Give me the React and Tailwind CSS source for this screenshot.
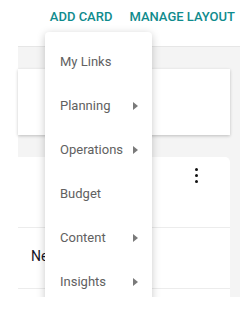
import React from 'react';

const items = [
  { label: 'My Links', sub: false },
  { label: 'Planning', sub: true },
  { label: 'Operations', sub: true },
  { label: 'Budget', sub: false },
  { label: 'Content', sub: true },
  { label: 'Insights', sub: true },
];

const Arrow = () => (
  <svg width="5" height="8" viewBox="0 0 5 8" className="absolute left-[88px] top-1/2 -translate-y-1/2">
    <path d="M0 0 L5 4 L0 8 Z" fill="#7a7a7a" />
  </svg>
);

const App = () => {
  return (
    <div className="w-[243px] h-[318px] bg-white font-['Roboto',sans-serif]">
      <div className="relative h-[297px] overflow-hidden">
        <div className="flex justify-end gap-[17px] pr-[8px] pt-[10px] h-[36px] text-[13px] font-medium text-[#0f8b8d] leading-[14px]">
          <span>ADD CARD</span>
          <span>MANAGE LAYOUT</span>
        </div>

        <div className="ml-[18px] w-[222px] h-[261px] mt-[10px] bg-[#f4f4f4] border-t border-[#e6e6e6] flex flex-col">
          <div className="mt-[22px] w-[212px] h-[71px] bg-white shadow-[0_1px_3px_rgba(0,0,0,0.22)]"></div>

          <div className="mt-[22px] w-[212px] h-[160px] bg-white rounded-tr-[5px]">
            <div className="relative h-[71px] border-b border-[#ececec]">
              <div className="absolute right-[32px] top-[11px] flex flex-col gap-[3px]">
                <span className="block w-[3px] h-[3px] rounded-full bg-[#111]"></span>
                <span className="block w-[3px] h-[3px] rounded-full bg-[#111]"></span>
                <span className="block w-[3px] h-[3px] rounded-full bg-[#111]"></span>
              </div>
            </div>
            <div className="h-[61px] border-b border-[#ececec] pl-[13px] pt-[20px] text-[14px] leading-[16px] text-[#141428]">
              New
            </div>
          </div>
        </div>

        <div className="absolute left-[45px] top-[32px] w-[107px] bg-white rounded-[4px] py-2 shadow-[0_2px_8px_rgba(0,0,0,0.22)]">
          {items.map((item) => (
            <div key={item.label} className="relative h-11 flex items-center pl-[15px] text-[13px] text-[#616161]">
              {item.label}
              {item.sub && <Arrow />}
            </div>
          ))}
        </div>
      </div>
    </div>
  );
};

export default App;
